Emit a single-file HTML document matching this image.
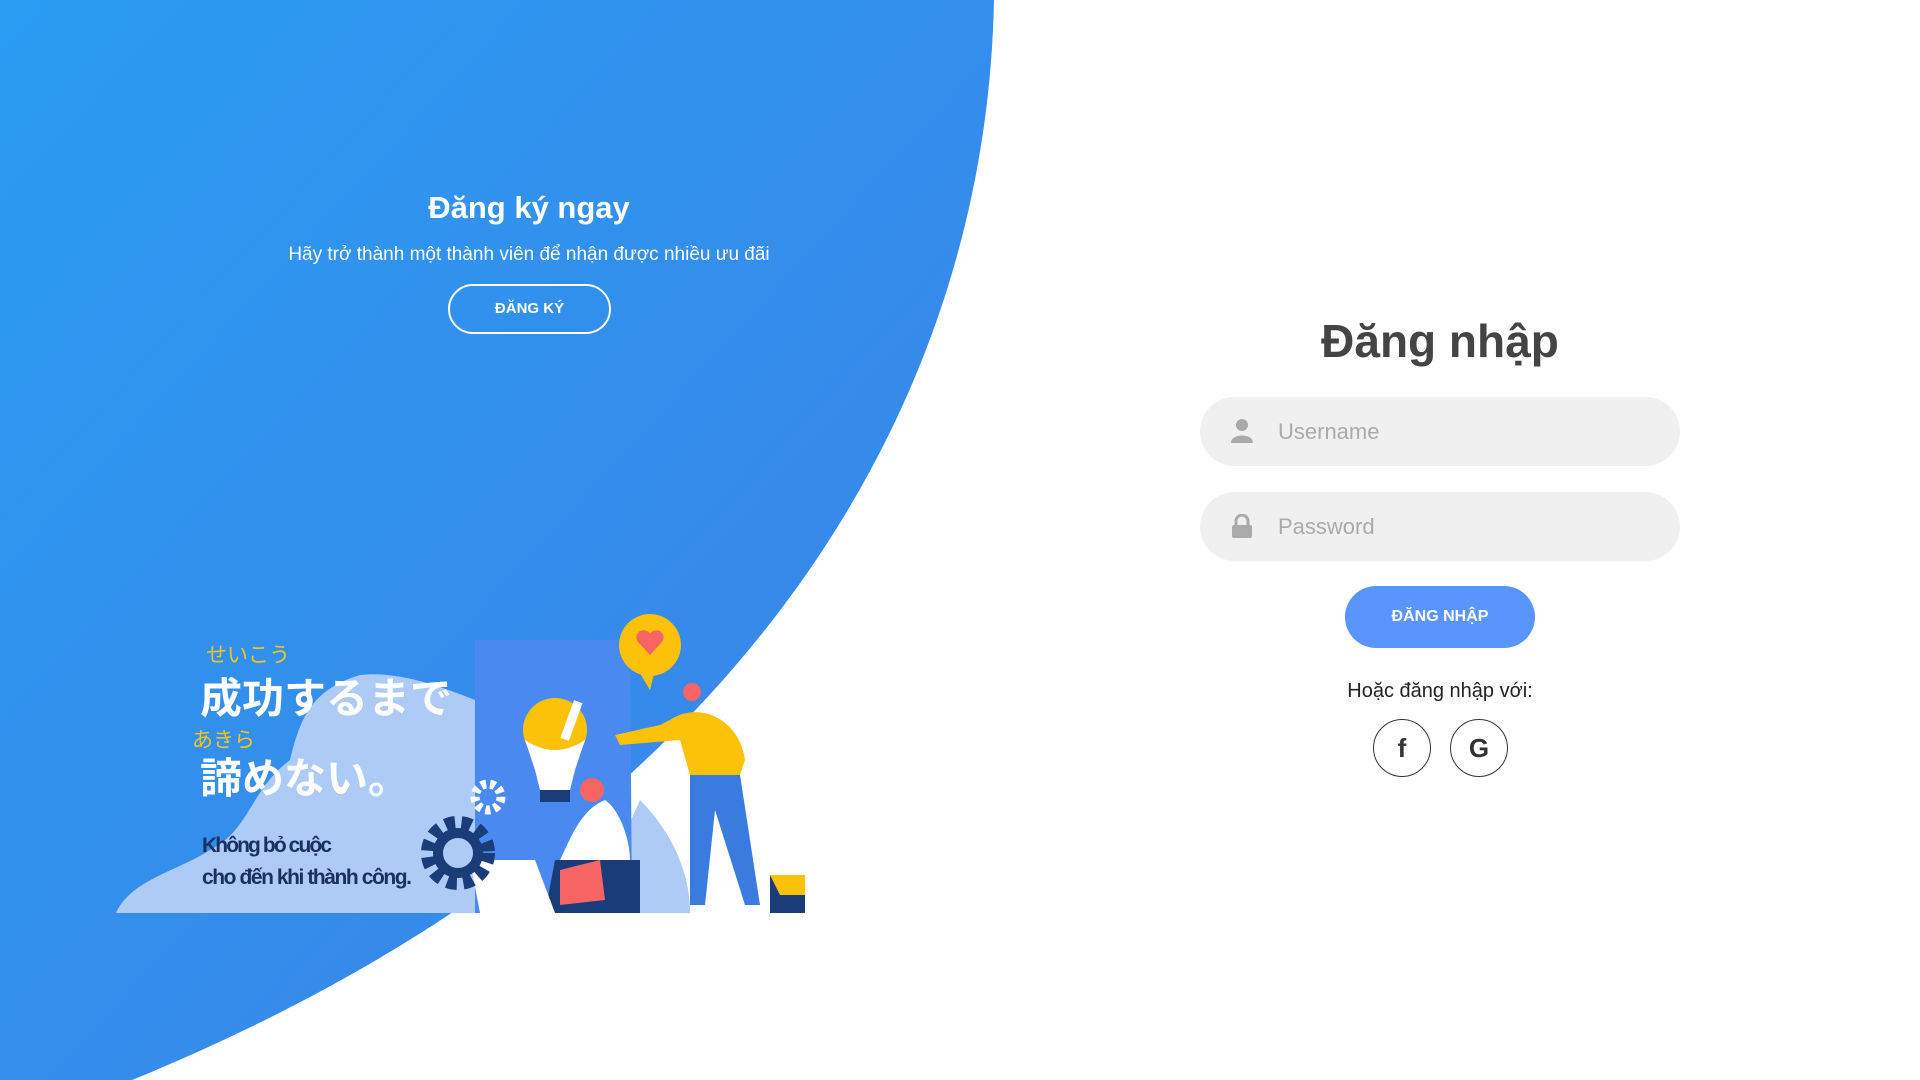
<!DOCTYPE html>
<html><head><meta charset="utf-8"><style>
html,body{margin:0;padding:0;width:1920px;height:1080px;overflow:hidden;background:#fff;font-family:"Liberation Sans","Noto Sans CJK JP",sans-serif;}
.abs{position:absolute}
#bg{position:absolute;left:0;top:0}
.t1{left:329px;width:400px;top:190px;text-align:center;color:#fff;font-weight:bold;font-size:31px}
.t2{left:229px;width:600px;top:244px;text-align:center;color:#fff;font-size:19px}
.b1{left:448px;top:284px;width:159px;height:46px;border:2px solid #fff;border-radius:25px;color:#fff;font-weight:bold;font-size:15px;text-align:center;line-height:46px}
.h{left:1240px;width:400px;top:314px;text-align:center;color:#444;font-weight:bold;font-size:46px}
.in{left:1200px;width:480px;height:69px;border-radius:35px;background:#f0f0f0;}
.in span{position:absolute;left:78px;top:0;line-height:69px;font-size:22px;color:#aaa}
.in svg{position:absolute;left:31px;top:22px}
.lb{left:1345px;width:190px;height:62px;border-radius:31px;background:#5995fd;color:#fff;font-weight:bold;font-size:16px;text-align:center;line-height:62px}
.or{left:1240px;width:400px;top:680px;text-align:center;color:#222;font-size:20px}
.c{width:56px;height:56px;border:1px solid #333;border-radius:50%;text-align:center;line-height:56px;font-weight:bold;font-size:26px;color:#333}
</style></head><body>
<svg id="bg" width="1920" height="1080">
<defs><linearGradient id="g" x1="0" y1="0" x2="1" y2="1"><stop offset="0" stop-color="#2a9cf2"/><stop offset="1" stop-color="#3d80e6"/></linearGradient></defs>
<path d="M0,0 L994,0 C985,450 695,850 132,1080 L0,1080 Z" fill="url(#g)"/>
<path d="M116,913 C130,880 180,870 210,850 C250,830 250,790 290,760 C300,720 310,690 360,675 C400,670 450,690 475,700 L475,913 Z" fill="#aecbf5"/>
<path d="M590,913 L640,800 C660,820 690,860 690,913 Z" fill="#aecbf5"/>
<path d="M475,640 L630,640 L632,913 L475,913 Z" fill="#4a8af0"/>
<circle cx="650" cy="645" r="31" fill="#fcc20a"/><path d="M638,670 L650,690 L655,670Z" fill="#fcc20a"/>
<path d="M650,655 L638,642 C632,632 645,626 650,634 C655,626 668,632 662,642 Z" fill="#f76464"/>
<circle cx="555" cy="730" r="32" fill="#fcc20a"/>
<path d="M525,740 Q555,760 585,740 L575,770 L570,790 L540,790 L535,770Z" fill="#fff"/>
<rect x="540" y="790" width="30" height="12" fill="#1a3d7a"/>
<rect x="567" y="700" width="9" height="40" fill="#fff" transform="rotate(20 570 720)"/>
<path d="M670,720 C700,700 740,720 745,760 L740,775 L690,775 L680,740 L620,745 L615,735 L660,725Z" fill="#fcc20a"/>
<path d="M690,775 L740,775 L760,905 L745,905 L715,810 L705,905 L690,905 Z" fill="#3a7be0"/>
<circle cx="692" cy="692" r="9" fill="#f76464"/>
<path d="M605,800 C620,810 630,840 630,860 L560,860 C570,840 580,810 605,800Z" fill="#fff"/>
<path d="M555,860 L640,860 L640,913 L545,913 Z" fill="#1a3d7a"/>
<path d="M560,870 L600,860 L605,900 L560,905Z" fill="#f76464"/>
<circle cx="592" cy="790" r="12" fill="#f76464"/>
<path d="M470,860 L535,860 L555,913 L480,913 Z" fill="#fff"/>
<rect x="770" y="875" width="35" height="38" fill="#1a3d7a"/><path d="M770,875 L805,875 L805,895 L780,895Z" fill="#fcc20a"/>
<circle cx="458" cy="853" r="28" fill="none" stroke="#1a3d7a" stroke-width="18" stroke-dasharray="9 6"/>
<circle cx="458" cy="853" r="20" fill="none" stroke="#1a3d7a" stroke-width="10"/>
<circle cx="488" cy="797" r="13" fill="none" stroke="#fff" stroke-width="9" stroke-dasharray="5 4"/>
<text x="206" y="662" fill="#f3c420" font-size="21" font-family="Noto Sans CJK JP">せいこう</text>
<text x="200" y="713" fill="#fff" font-size="42" font-weight="bold" font-family="Noto Sans CJK JP">成功するまで</text>
<text x="192" y="747" fill="#f3c420" font-size="21" font-family="Noto Sans CJK JP">あきら</text>
<text x="200" y="793" fill="#fff" font-size="42" font-weight="bold" font-family="Noto Sans CJK JP">諦めない。</text>
<text x="202" y="852" fill="#1a3060" font-size="21" font-weight="bold" textLength="130">Không bỏ cuộc</text>
<text x="202" y="884" fill="#1a3060" font-size="21" font-weight="bold" textLength="210">cho đến khi thành công.</text>
</svg>
<div class="abs t1">Đăng ký ngay</div>
<div class="abs t2">Hãy trở thành một thành viên để nhận được nhiều ưu đãi</div>
<div class="abs b1">ĐĂNG KÝ</div>
<div class="abs h">Đăng nhập</div>
<div class="abs in" style="top:397px"><svg width="22" height="24" viewBox="0 0 22 24"><circle cx="11" cy="6" r="6" fill="#aaa"/><path d="M0,24 C0,14 22,14 22,24Z" fill="#aaa"/></svg><span>Username</span></div>
<div class="abs in" style="top:492px"><svg width="22" height="24" viewBox="0 0 22 24"><path d="M5,11 V7 a6,6 0 0 1 12,0 V11" fill="none" stroke="#aaa" stroke-width="3"/><rect x="1" y="11" width="20" height="13" rx="2" fill="#aaa"/></svg><span>Password</span></div>
<div class="abs lb" style="top:586px">ĐĂNG NHẬP</div>
<div class="abs or">Hoặc đăng nhập với:</div>
<div class="abs c" style="left:1373px;top:719px">f</div>
<div class="abs c" style="left:1450px;top:719px">G</div>
</body></html>
